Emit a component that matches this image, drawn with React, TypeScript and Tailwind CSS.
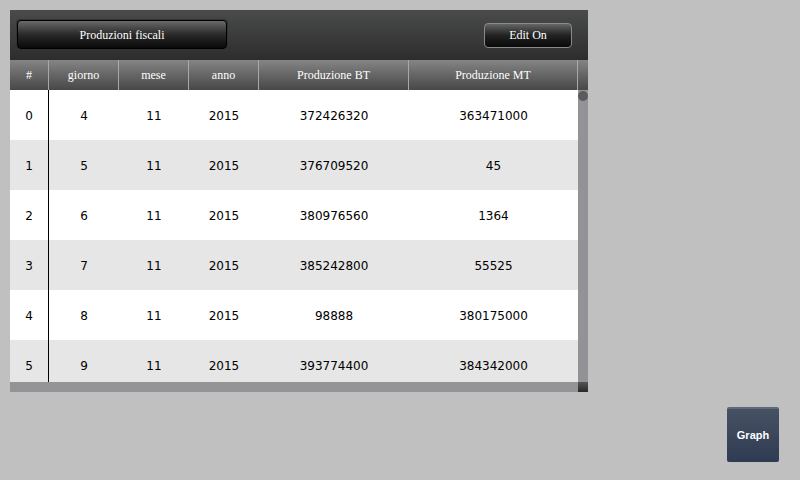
import React from "react";

const rows = [
    [0, 4, 11, 2015, 372426320, 363471000],
    [1, 5, 11, 2015, 376709520, 45],
    [2, 6, 11, 2015, 380976560, 1364],
    [3, 7, 11, 2015, 385242800, 55525],
    [4, 8, 11, 2015, 98888, 380175000],
    [5, 9, 11, 2015, 393774400, 384342000],
];

const cols = ["w-[39px]", "w-[70px]", "w-[70px]", "w-[70px]", "w-[150px]", "w-[169px]"];
const heads = ["#", "giorno", "mese", "anno", "Produzione BT", "Produzione MT"];

export default function App() {
    return (
        <div className="w-[800px] h-[480px] bg-[#c0c0c0] relative overflow-hidden font-['DejaVu_Sans',sans-serif]">
            {/* Panel */}
            <div className="absolute left-[10px] top-[10px] w-[578px] h-[382px] flex flex-col">
                {/* Toolbar */}
                <div className="h-[50px] bg-gradient-to-b from-[#4a4b4b] to-[#2d2d2d] flex items-center px-[6px]">
                    <div className="w-[212px] h-[31px] rounded-[4px] bg-[#333] p-[1px] mt-[-1px]">
                        <div className="h-full rounded-[4px] border border-black bg-gradient-to-b from-[#6a6a6a] via-[#2a2a2a] to-[#0a0a0a] flex items-center justify-center text-white text-[12px] font-['Liberation_Serif',serif]">
                            Produzioni fiscali
                        </div>
                    </div>
                    <div className="ml-auto mr-[10px] w-[88px] h-[25px] rounded-[4px] border border-[#8a8a8a] bg-gradient-to-b from-[#666] via-[#222] to-[#0a0a0a] flex items-center justify-center text-white text-[12px] font-['Liberation_Serif',serif]">
                        Edit On
                    </div>
                </div>
                {/* Column headers */}
                <div className="h-[30px] flex bg-gradient-to-b from-[#858585] to-[#484848] text-white text-[12px] font-['Liberation_Serif',serif]">
                    {heads.map((h, i) => (
                        <div key={h} className={`${cols[i]} h-full flex items-center justify-center border-r border-[#a8a8a8]`}>
                            {h}
                        </div>
                    ))}
                    <div className="flex-1" />
                </div>
                {/* Body */}
                <div className="flex flex-1 overflow-hidden">
                    <div className="w-[568px] overflow-hidden relative">
                        {rows.map((r, ri) => (
                            <div key={ri} className={`h-[50px] flex text-[12px] text-black ${ri % 2 ? "bg-[#e6e6e6]" : "bg-white"}`}>
                                {r.map((v, ci) => (
                                    <div key={ci} className={`${cols[ci]} flex items-center justify-center pt-[2px] ${ci === 0 ? "border-r border-black" : ""}`}>
                                        {v}
                                    </div>
                                ))}
                            </div>
                        ))}
                    </div>
                    <div className="w-[10px] bg-[#939397] flex justify-center pt-[1px]">
                        <div className="w-[10px] h-[10px] rounded-full bg-[#5c5c5e]" />
                    </div>
                </div>
                {/* Horizontal scrollbar */}
                <div className="h-[10px] flex">
                    <div className="flex-1 bg-[#949497]" />
                    <div className="w-[10px] bg-gradient-to-b from-[#555] to-[#2a2a2a]" />
                </div>
            </div>

            {/* Graph button */}
            <div className="absolute left-[727px] top-[407px] w-[52px] h-[55px] rounded-[2px] border-t-[2px] border-[#5d6878] bg-gradient-to-b from-[#465163] to-[#2f3b52] flex items-center justify-center text-white text-[11px] font-bold font-['Liberation_Sans',sans-serif]">
                Graph
            </div>
        </div>
    );
}
